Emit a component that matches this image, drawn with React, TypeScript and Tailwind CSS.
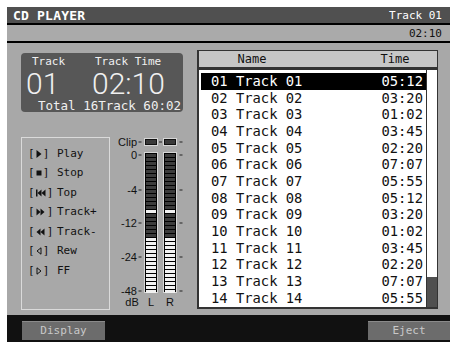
import React from "react";

const times = ["05:12", "03:20", "01:02", "03:45", "02:20", "07:07", "05:55"];

const tracks = Array.from({ length: 14 }, (_, i) => {
  const n = (i + 1).toString().padStart(2, "0");
  return { no: n, name: `Track ${n}`, time: times[i % times.length] };
});

function Icon({ kind }: { kind: string }) {
  if (kind === "play")
    return (
      <svg width="6" height="8" viewBox="0 0 6 8">
        <polygon points="0.5,0 5.5,4 0.5,8" fill="#111" />
      </svg>
    );
  if (kind === "stop")
    return (
      <svg width="6" height="8" viewBox="0 0 6 8">
        <rect x="0.5" y="1.5" width="5" height="5" fill="#111" />
      </svg>
    );
  if (kind === "top")
    return (
      <svg width="10" height="8" viewBox="0 0 10 8">
        <rect x="0" y="0.5" width="1.5" height="7" fill="#111" />
        <polygon points="5.5,0.5 1.5,4 5.5,7.5" fill="#111" />
        <polygon points="9.5,0.5 5.5,4 9.5,7.5" fill="#111" />
      </svg>
    );
  if (kind === "next")
    return (
      <svg width="10" height="8" viewBox="0 0 10 8">
        <polygon points="0.5,0.5 4.5,4 0.5,7.5" fill="#111" />
        <polygon points="4.5,0.5 8.5,4 4.5,7.5" fill="#111" />
      </svg>
    );
  if (kind === "prev")
    return (
      <svg width="10" height="8" viewBox="0 0 10 8">
        <polygon points="4.5,0.5 0.5,4 4.5,7.5" fill="#111" />
        <polygon points="8.5,0.5 4.5,4 8.5,7.5" fill="#111" />
      </svg>
    );
  if (kind === "rew")
    return (
      <svg width="6" height="8" viewBox="0 0 6 8">
        <polygon points="5,0.8 1,4 5,7.2" fill="none" stroke="#111" strokeWidth="1" />
      </svg>
    );
  return (
    <svg width="6" height="8" viewBox="0 0 6 8">
      <polygon points="1,0.8 5,4 1,7.2" fill="none" stroke="#111" strokeWidth="1" />
    </svg>
  );
}

const controls = [
  { icon: "play", label: "Play" },
  { icon: "stop", label: "Stop" },
  { icon: "top", label: "Top" },
  { icon: "next", label: "Track+" },
  { icon: "prev", label: "Track-" },
  { icon: "rew", label: "Rew" },
  { icon: "ff", label: "FF" },
];

function Meter() {
  const segs = Array.from({ length: 35 }, (_, i) => i);
  const scale = [
    { t: "0", y: 20 },
    { t: "-4", y: 55 },
    { t: "-12", y: 88 },
    { t: "-24", y: 122 },
    { t: "-48", y: 156 },
  ];
  const bars = [32, 51];
  return (
    <svg width="74" height="175" viewBox="0 0 74 175" className="ml-[2px] shrink-0">
      <g fontFamily="'Liberation Sans', Arial, sans-serif" fontSize="11" fill="#111">
        <text x="25" y="11" textAnchor="end">Clip</text>
        {scale.map((s) => (
          <text key={s.t} x="25" y={s.y + 4} textAnchor="end">{s.t}</text>
        ))}
        <text x="20" y="171" textAnchor="middle">dB</text>
        <text x="39" y="171" textAnchor="middle">L</text>
        <text x="58" y="171" textAnchor="middle">R</text>
      </g>
      {[7, ...scale.map((s) => s.y)].map((y) => (
        <g key={y} fill="#222">
          <rect x="26.5" y={y - 0.5} width="3" height="1" />
          <rect x="67.5" y={y - 0.5} width="3" height="1" />
        </g>
      ))}
      <rect x="47" y="6.5" width="3" height="1" fill="#222" />
      {bars.map((x) => (
        <g key={x}>
          <rect x={x + 0.5} y="3.5" width="13" height="7" fill="#111" stroke="#d6d6d6" />
          <rect x={x + 2} y="5" width="10" height="4" fill="#3a3a3a" />
          <rect x={x + 0.5} y="17.5" width="13" height="140" fill="#000" stroke="#d6d6d6" />
          {segs.map((i) => {
            const lit = i >= 21 || i === 14;
            return (
              <rect
                key={i}
                x={x + 2}
                y={19 + i * 4}
                width="10"
                height="3"
                fill={lit ? "#f2f2f2" : "#3c3c3c"}
              />
            );
          })}
        </g>
      ))}
    </svg>
  );
}

export default function App() {
  const mono = "font-['DejaVu_Sans_Mono',monospace]";
  return (
    <div className="w-[454px] h-[346px] bg-white pl-[7px] pt-[7px] pr-[4px] pb-[4px]">
      <div className={`w-full h-full flex flex-col bg-[#a8a8a8] ${mono}`}>
        {/* title bar */}
        <div className="h-[16px] bg-[#505050] flex items-center justify-between px-[6px] pr-[8px] text-white">
          <span className="text-[13px] font-bold leading-none tracking-[0.2px]">CD PLAYER</span>
          <span className="text-[11px] leading-none">Track 01</span>
        </div>
        <div className="h-[2px] bg-black" />
        <div className="h-[16px] bg-[#aaaaaa] flex items-center justify-end pr-[8px] text-[11px] text-[#111] leading-none">
          02:10
        </div>
        <div className="h-[2px] bg-black" />

        {/* body */}
        <div className="flex-1 flex pl-[14px]">
          <div className="w-[165px] pt-[10px] flex flex-col">
            <div className="w-[162px] h-[59px] rounded-[4px] bg-[#575757] text-[#f0f0f0] flex flex-col pt-[3px]">
              <div className="flex pl-[5px]">
                <div className="w-[66px] flex flex-col">
                  <div className="ml-[6px] text-[11px] leading-[11px]">Track</div>
                  <div className="mt-[2px] font-['Roboto',sans-serif] font-light text-[30px] leading-[30px]">01</div>
                </div>
                <div className="flex flex-col">
                  <div className="ml-[3px] text-[11px] leading-[11px]">Track Time</div>
                  <div className="mt-[2px] font-['Roboto',sans-serif] font-light text-[30px] leading-[30px]">02:10</div>
                </div>
              </div>
              <div className="text-right pr-[2px] text-[12.5px] leading-[13px]">Total 16Track 60:02</div>
            </div>

            <div className="flex items-start mt-[23px]">
              <div className="mt-[2px] w-[89px] h-[173px] border border-[#dadada] pt-[6px] pl-[6px]">
                {controls.map((c) => (
                  <div key={c.label} className="h-[19.5px] flex items-center text-[11px] text-[#111]">
                    <div className="w-[29px] flex items-center">
                      <span>[</span>
                      <span className="mx-[1px] flex items-center">
                        <Icon kind={c.icon} />
                      </span>
                      <span>]</span>
                    </div>
                    <span>{c.label}</span>
                  </div>
                ))}
              </div>
              <Meter />
            </div>
          </div>

          {/* track list */}
          <div className="ml-[11px] mt-[7px] w-[241px] h-[259px] border-l-2 border-t border-r border-b-2 border-[#333] flex flex-col bg-white">
            <div className="h-[17px] bg-[#c6c6c6] flex items-center text-[12px] text-[#111] leading-none">
              <div className="w-[106px] text-center">Name</div>
              <div className="ml-auto w-[60px] text-center mr-[12px]">Time</div>
            </div>
            <div className="h-[3px] bg-[#333]" />
            <div className="flex-1 flex">
              <div className="w-[227px] pl-[2px] pt-[3px]">
                {tracks.map((t, i) => (
                  <div
                    key={t.no}
                    className={`h-[16.7px] flex items-center justify-between pl-[10px] pr-[3px] text-[13.8px] leading-none ${
                      i === 0 ? "bg-black text-white" : "text-[#111]"
                    }`}
                  >
                    <span className="whitespace-pre">{`${t.no} ${t.name}`}</span>
                    <span>{t.time}</span>
                  </div>
                ))}
              </div>
              <div className="flex-1 border-l border-[#333] flex flex-col justify-end">
                <div className="h-[30px] bg-[#505050]" />
              </div>
            </div>
          </div>
        </div>

        {/* bottom bar */}
        <div className="h-[27px] bg-[#111] flex items-start pt-[6px] pl-[15px]">
          <div className="w-[83px] h-[19px] bg-[#6c6c6c] border-t border-[#8a8a8a] flex items-center justify-center text-[11px] text-[#c8c8c8]">
            Display
          </div>
          <div className="ml-auto w-[82px] h-[19px] bg-[#6c6c6c] border-t border-[#8a8a8a] flex items-center justify-center text-[11px] text-[#c8c8c8]">
            Eject
          </div>
        </div>
      </div>
    </div>
  );
}
